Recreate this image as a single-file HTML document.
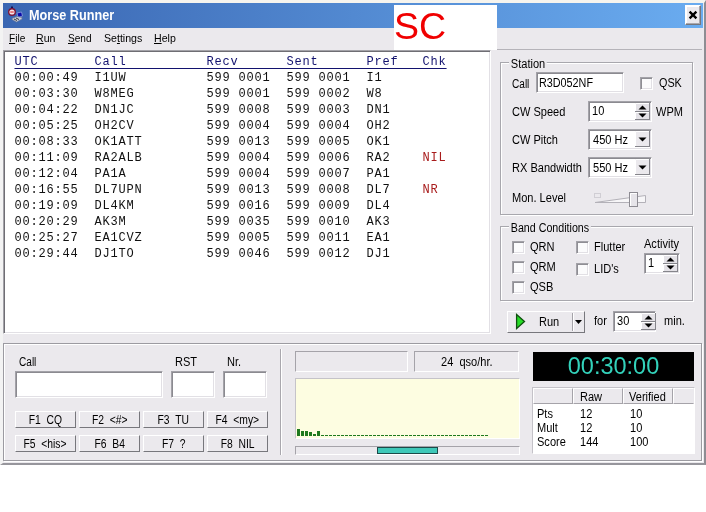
<!DOCTYPE html>
<html><head><meta charset="utf-8">
<style>
*{box-sizing:border-box;margin:0;padding:0}
html,body{width:706px;height:512px;background:#fff;overflow:hidden}
body{font-family:"Liberation Sans",sans-serif;font-size:12px;color:#000;position:relative}
.a{position:absolute}
.t{position:absolute;white-space:nowrap;line-height:14px;height:14px;transform:scaleX(.92);transform-origin:0 0}
#win{left:0;top:0;width:706px;height:465px;background:#ebe9ed;border:3px solid #fbfbfb;border-left-color:#f3f3f3;border-top-color:#f6f4ee;border-right:2px solid #8e8d93;border-bottom:2px solid #97969c}
#title{left:3px;top:3px;width:700px;height:25px;background:linear-gradient(90deg,#3a66b2,#6aacf0)}
.sunk{border:1px solid;border-color:#9d9da1 #fff #fff #9d9da1;background:#fff}
.sunk2{border:1px solid;border-color:#a3a2a8 #fff #fff #a3a2a8;background:#fff;box-shadow:inset 1px 1px 0 #8b8a90,inset -1px -1px 0 #e2e0e5}
.btn span{display:inline-block;transform:scaleX(.86);white-space:nowrap}
.btn{position:absolute;border:1px solid;border-color:#fff #77777c #77777c #fff;background:#ebe9ed;text-align:center;font-size:12px;line-height:14px}
.grp{position:absolute;border:1px solid #a8a7ad;box-shadow:1px 1px 0 #fff, inset 1px 1px 0 #fff}
.cb{position:absolute;width:13px;height:13px;border:1px solid;border-color:#a3a2a8 #fff #fff #a3a2a8;background:#fbfbfc;box-shadow:inset 1px 1px 0 #8f8e94,inset -1px -1px 0 #e2e0e5}
pre{font-family:"Liberation Mono",monospace;font-size:12px;letter-spacing:.8px;line-height:16px;position:absolute;left:14.5px;white-space:pre;color:#111}
.hd{color:#12126e;text-decoration:underline;text-decoration-thickness:1px;text-underline-offset:3px}
.r{color:#a81c1c}


.spin,.combo{position:absolute}
</style></head><body><div id="root" style="position:absolute;left:0;top:0;width:706px;height:512px;will-change:transform">
<svg width="0" height="0" style="position:absolute"><defs>
<g id="spin"><rect x="0" y="0" width="15" height="17" fill="#e4e2e7"/><path d="M0.5 8 V0.5 H14" stroke="#fff" fill="none"/><path d="M0.5 16.5 V9.5 H14" stroke="#fff" fill="none"/><path d="M0 8.5 H15 M14.5 0 V17 M0 16.5 H15" stroke="#85858b" fill="none"/><path d="M7.5 2.5 L11.5 6.5 H3.5 Z" fill="#000"/><path d="M7.5 14.5 L11.5 10.5 H3.5 Z" fill="#000"/></g>
<g id="combo"><rect x="0" y="0" width="15" height="16" fill="#ebe9ed"/><path d="M0.5 15 V0.5 H14" stroke="#fff" fill="none"/><path d="M14.5 0 V16 M0 15.5 H15" stroke="#85858b" fill="none"/><path d="M3.5 6.5 H11.5 L7.5 10.5 Z" fill="#000"/></g>
</defs></svg>
<div class="a" id="win"></div>
<div class="a" id="title"></div>
<!-- icon -->
<svg class="a" style="left:7px;top:6px" width="17" height="17" viewBox="0 0 17 17">
<rect x="4" y="0.5" width="2" height="2" fill="#1a1050"/>
<circle cx="5" cy="6" r="3.3" fill="#f6e6ea" stroke="#7c1436" stroke-width="1.4"/>
<path d="M3.3 6 H6.7" stroke="#e03030" stroke-width="1.1"/>
<path d="M10 7 L14.5 6 L15.5 10 L11 11.5 Z" fill="#0a0aa8" stroke="#8fa0e0" stroke-width=".8"/>
<path d="M5 12.5 L10 10.5 L15 11.5 L15 13 L9.5 16 L5 13.5 Z" fill="#c9cfdc" stroke="#6e7a96" stroke-width=".7"/>
<path d="M7 13 L10 14.5 M9 12 L12 13.5" stroke="#222" stroke-width=".9"/>
</svg>
<div class="t" style="left:29px;top:7px;color:#fff;font-weight:bold;font-size:14px;line-height:16px;height:16px;transform:scaleX(.905)">Morse Runner</div>
<!-- SC box -->
<div class="a" style="left:394px;top:5px;width:103px;height:45px;background:#fff"></div>
<div class="t" style="left:394px;top:4px;font-size:37.5px;line-height:44px;height:44px;color:#f00000;transform:none">SC</div>
<!-- close -->
<div class="a" style="left:685px;top:5px;width:16px;height:20px;background:#ebe9ed;border:1px solid;border-color:#fff #77777c #77777c #fff;box-shadow:inset -1px -1px 0 #a9a8ae,inset 1px 1px 0 #fff"></div>
<svg class="a" style="left:688px;top:10px" width="10" height="10" viewBox="0 0 10 10"><path d="M1.6 1.6 L8.4 8.4 M8.4 1.6 L1.6 8.4" stroke="#000" stroke-width="2.3"/></svg>
<!-- menu -->
<div class="t" style="left:9px;top:31px;font-size:11.5px;transform:scaleX(.88)"><u>F</u>ile</div>
<div class="t" style="left:36px;top:31px;font-size:11.5px"><u>R</u>un</div>
<div class="t" style="left:68px;top:31px;font-size:11.5px;transform:scaleX(.875)"><u>S</u>end</div>
<div class="t" style="left:104px;top:31px;font-size:11.5px">Se<u>t</u>tings</div>
<div class="t" style="left:154px;top:31px;font-size:11.5px"><u>H</u>elp</div>
<div class="a" style="left:497px;top:49px;width:205px;height:1px;background:#b5b3b9"></div>
<!-- list -->
<div class="a sunk2" style="left:3px;top:50px;width:488px;height:284px;box-shadow:inset 1px 1px 0 #6f6e74,inset -1px -1px 0 #e2e0e5"></div>
<pre style="top:54px"><span class="hd">UTC       Call          Recv      Sent      Pref   Chk</span>
00:00:49  I1UW          599 0001  599 0001  I1
00:03:30  W8MEG         599 0001  599 0002  W8
00:04:22  DN1JC         599 0008  599 0003  DN1
00:05:25  OH2CV         599 0004  599 0004  OH2
00:08:33  OK1ATT        599 0013  599 0005  OK1
00:11:09  RA2ALB        599 0004  599 0006  RA2    <span class="r">NIL</span>
00:12:04  PA1A          599 0004  599 0007  PA1
00:16:55  DL7UPN        599 0013  599 0008  DL7    <span class="r">NR</span>
00:19:09  DL4KM         599 0016  599 0009  DL4
00:20:29  AK3M          599 0035  599 0010  AK3
00:25:27  EA1CVZ        599 0005  599 0011  EA1
00:29:44  DJ1TO         599 0046  599 0012  DJ1</pre>
<!-- station group -->
<div class="grp" style="left:500px;top:62px;width:193px;height:153px"></div>
<div class="t" style="left:509px;top:57px;background:#ebe9ed;padding:0 2px">Station</div>
<div class="t" style="left:512px;top:77px;transform:scaleX(.84)">Call</div>
<div class="a sunk2" style="left:536px;top:72px;width:88px;height:21px"></div>
<div class="t" style="left:539px;top:76px;transform:scaleX(.9)">R3D052NF</div>
<div class="cb" style="left:640px;top:77px"></div>
<div class="t" style="left:659px;top:76px;transform:scaleX(.9)">QSK</div>
<div class="t" style="left:512px;top:105px">CW Speed</div>
<div class="a sunk2" style="left:588px;top:101px;width:64px;height:21px"></div>
<div class="t" style="left:592px;top:104px">10</div>
<div class="t" style="left:656px;top:105px">WPM</div>
<div class="t" style="left:512px;top:133px">CW Pitch</div>
<div class="a sunk2" style="left:588px;top:129px;width:64px;height:21px"></div>
<div class="t" style="left:593px;top:133px">450 Hz</div>
<div class="t" style="left:512px;top:161px">RX Bandwidth</div>
<div class="a sunk2" style="left:588px;top:157px;width:64px;height:21px"></div>
<div class="t" style="left:593px;top:161px">550 Hz</div>
<div class="t" style="left:512px;top:191px">Mon. Level</div>
<!-- band group -->
<div class="grp" style="left:500px;top:226px;width:193px;height:75px"></div>
<div class="t" style="left:509px;top:221px;background:#ebe9ed;padding:0 2px;transform:scaleX(.89)">Band Conditions</div>
<div class="cb" style="left:512px;top:241px"></div><div class="t" style="left:530px;top:240px">QRN</div>
<div class="cb" style="left:512px;top:261px"></div><div class="t" style="left:530px;top:260px">QRM</div>
<div class="cb" style="left:512px;top:281px"></div><div class="t" style="left:530px;top:280px">QSB</div>
<div class="cb" style="left:576px;top:241px"></div><div class="t" style="left:594px;top:240px">Flutter</div>
<div class="cb" style="left:576px;top:263px"></div><div class="t" style="left:594px;top:262px">LID's</div>
<div class="t" style="left:644px;top:237px">Activity</div>
<div class="a sunk2" style="left:644px;top:253px;width:36px;height:21px"></div>
<div class="t" style="left:648px;top:256px">1</div>
<!-- run -->
<div class="btn" style="left:507px;top:311px;width:78px;height:22px"></div>
<div class="t" style="left:539px;top:315px">Run</div>
<div class="t" style="left:594px;top:314px">for</div>
<div class="a sunk2" style="left:613px;top:311px;width:43px;height:21px"></div>
<div class="t" style="left:617px;top:314px">30</div>
<div class="t" style="left:664px;top:314px">min.</div>

<!-- spin speed -->
<svg class="spin" style="left:635px;top:103px" width="15" height="17"><use href="#spin"/></svg>
<svg class="combo" style="left:635px;top:131px" width="15" height="16"><use href="#combo"/></svg>
<svg class="combo" style="left:635px;top:159px" width="15" height="16"><use href="#combo"/></svg>
<svg class="spin" style="left:663px;top:255px" width="15" height="17"><use href="#spin"/></svg>
<svg class="spin" style="left:641px;top:313px" width="15" height="17"><use href="#spin"/></svg>
<!-- slider -->
<svg class="a" style="left:594px;top:191px" width="54" height="18" viewBox="0 0 54 18"><rect x="0.5" y="2.5" width="6" height="4" fill="none" stroke="#d0ced4"/><path d="M1 11.5 L51.5 4.5 L51.5 11.5 Z" fill="#f7f6f8" stroke="#b3b1b8" stroke-width="1"/><rect x="35.5" y="1.5" width="8" height="14" fill="#e6e4e9" stroke="#8d8b92"/><path d="M36.5 15 V2.5 H43" fill="none" stroke="#fff"/></svg>
<!-- run tri -->
<svg class="a" style="left:515px;top:313px" width="12" height="17" viewBox="0 0 12 17"><path d="M1.6 1.5 L9.5 8.5 L1.6 15.5 Z" fill="#26dc26" stroke="#0f4f0f" stroke-width="1.3"/></svg>
<div class="a" style="left:572px;top:313px;width:1px;height:18px;background:#a5a3a9"></div>
<div class="a" style="left:573px;top:313px;width:1px;height:18px;background:#fff"></div>
<svg class="a" style="left:575px;top:320px" width="7" height="4" viewBox="0 0 7 4"><path d="M0 0 L7 0 L3.5 4 Z" fill="#000"/></svg>
<!-- bottom panel -->
<div class="a" style="left:4px;top:344px;width:699px;height:118px;border:1px solid #fff"></div>
<div class="a" style="left:3px;top:343px;width:699px;height:118px;border:1px solid #9c9ba1"></div>
<div class="t" style="left:19px;top:355px;transform:scaleX(.84)">Call</div>
<div class="t" style="left:175px;top:355px">RST</div>
<div class="t" style="left:227px;top:355px">Nr.</div>
<div class="a sunk2" style="left:15px;top:371px;width:148px;height:27px"></div>
<div class="a sunk2" style="left:171px;top:371px;width:44px;height:27px"></div>
<div class="a sunk2" style="left:223px;top:371px;width:44px;height:27px"></div>
<div class="btn" style="left:15px;top:411px;width:61px;height:17px;padding-top:1px"><span>F1&nbsp; CQ</span></div>
<div class="btn" style="left:79px;top:411px;width:61px;height:17px;padding-top:1px"><span>F2&nbsp; &lt;#&gt;</span></div>
<div class="btn" style="left:143px;top:411px;width:61px;height:17px;padding-top:1px"><span>F3&nbsp; TU</span></div>
<div class="btn" style="left:207px;top:411px;width:61px;height:17px;padding-top:1px"><span>F4&nbsp; &lt;my&gt;</span></div>
<div class="btn" style="left:15px;top:435px;width:61px;height:17px;padding-top:1px"><span>F5&nbsp; &lt;his&gt;</span></div>
<div class="btn" style="left:79px;top:435px;width:61px;height:17px;padding-top:1px"><span>F6&nbsp; B4</span></div>
<div class="btn" style="left:143px;top:435px;width:61px;height:17px;padding-top:1px"><span>F7&nbsp; ?</span></div>
<div class="btn" style="left:207px;top:435px;width:61px;height:17px;padding-top:1px"><span>F8&nbsp; NIL</span></div>
<!-- separator -->
<div class="a" style="left:280px;top:349px;width:1px;height:106px;background:#a9a7ad"></div>
<div class="a" style="left:281px;top:349px;width:1px;height:106px;background:#fff"></div>
<!-- middle -->
<div class="a" style="left:295px;top:351px;width:113px;height:21px;border:1px solid;border-color:#a5a3a9 #fff #fff #a5a3a9"></div>
<div class="a" style="left:414px;top:351px;width:105px;height:21px;border:1px solid;border-color:#a5a3a9 #fff #fff #a5a3a9"></div>
<div class="t" style="left:441px;top:355px">24&nbsp; qso/hr.</div>
<div class="a" style="left:295px;top:378px;width:225px;height:61px;background:#fdfde1;border:1px solid;border-color:#c5c3c9 #fff #fff #c5c3c9"></div>
<div class="a" style="left:295px;top:446px;width:225px;height:9px;border:1px solid;border-color:#a5a3a9 #fff #fff #a5a3a9"></div>
<div class="a" style="left:377px;top:447px;width:61px;height:7px;background:#3fc8b8;border:1px solid #1c4a48"></div>
<!-- graph -->
<svg class="a" style="left:296px;top:426px" width="200" height="12" viewBox="0 0 200 12">
<g fill="#1f7a1f"><rect x="1" y="3" width="3" height="7"/><rect x="5" y="5" width="3" height="5"/><rect x="9" y="5" width="3" height="5"/><rect x="13" y="6" width="3" height="4"/><rect x="17" y="8" width="3" height="2"/><rect x="21" y="5" width="3" height="5"/></g>
<path d="M25 9.5 H192" stroke="#1f7a1f" stroke-width="1" stroke-dasharray="3 1"/></svg>
<!-- clock -->
<div class="a" style="left:533px;top:352px;width:161px;height:29px;background:#000"></div>
<div class="t" style="left:533px;top:352px;width:161px;height:29px;line-height:29px;text-align:center;color:#33d2bb;font-size:23.5px;transform:none">00:30:00</div>
<!-- score -->
<div class="a" style="left:532px;top:387px;width:163px;height:67px;background:#fff;border:1px solid;border-color:#c4c2c8 #fff #fff #c4c2c8"></div>
<div class="a" style="left:533px;top:388px;width:161px;height:16px;background:#ebe9ed;border-bottom:1px solid #a5a3a9"></div>
<div class="a" style="left:533px;top:388px;width:40px;height:16px;border:1px solid;border-color:#fff #a5a3a9 #a5a3a9 #fff"></div>
<div class="a" style="left:573px;top:388px;width:50px;height:16px;border:1px solid;border-color:#fff #a5a3a9 #a5a3a9 #fff"></div>
<div class="a" style="left:623px;top:388px;width:50px;height:16px;border:1px solid;border-color:#fff #a5a3a9 #a5a3a9 #fff"></div>
<div class="a" style="left:673px;top:388px;width:21px;height:16px;border:1px solid;border-color:#fff #ebe9ed #a5a3a9 #fff"></div>
<div class="t" style="left:580px;top:390px">Raw</div>
<div class="t" style="left:629px;top:390px">Verified</div>
<div class="t" style="left:537px;top:407px">Pts</div><div class="t" style="left:580px;top:407px">12</div><div class="t" style="left:630px;top:407px">10</div>
<div class="t" style="left:537px;top:421px">Mult</div><div class="t" style="left:580px;top:421px">12</div><div class="t" style="left:630px;top:421px">10</div>
<div class="t" style="left:537px;top:435px">Score</div><div class="t" style="left:580px;top:435px">144</div><div class="t" style="left:630px;top:435px">100</div>
</div></body></html>
